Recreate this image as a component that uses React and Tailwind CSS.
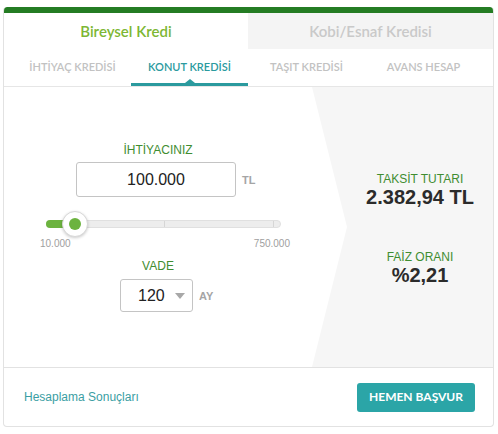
import React from 'react';

const subTabs = ['İHTİYAÇ KREDİSİ', 'KONUT KREDİSİ', 'TAŞIT KREDİSİ', 'AVANS HESAP'];

export default function App() {
  return (
    <div className="w-[498px] h-[434px] bg-white pt-[7px] pl-[3px] font-['Liberation_Sans',Arial,sans-serif]">
      <div className="w-[491px] h-[420px] flex flex-col rounded-[4px] border border-t-0 border-[#e2e2e2] overflow-hidden">
        {/* green strip */}
        <div className="h-[6px] bg-[#247c23] -mx-px rounded-t-[4px]" />

        {/* main tabs */}
        <div className="flex h-[36px] font-['Lato',sans-serif] text-[15px] font-semibold">
          <div className="w-[244px] flex items-center justify-center text-[#7db734]">Bireysel Kredi</div>
          <div className="flex-1 flex items-center justify-center bg-[#f4f4f4] text-[#c9c9c9]">Kobi/Esnaf Kredisi</div>
        </div>

        {/* sub tabs */}
        <div className="flex h-[38px] px-[10px] border-b border-[#e6e6e6] font-['Lato',sans-serif] text-[11px] font-semibold">
          {subTabs.map((t, i) => (
            <div
              key={t}
              className={`relative w-[117px] flex items-center justify-center ${i === 1 ? 'text-[#2b9a9e]' : 'text-[#c2c2c2]'}`}
            >
              {t}
              {i === 1 && (
                <>
                  <div className="absolute left-0 right-0 bottom-0 h-[3px] bg-[#2b9a9e]" />
                  <div className="absolute left-1/2 -translate-x-1/2 bottom-[3px] w-0 h-0 border-x-[5px] border-x-transparent border-b-[4px] border-b-[#2b9a9e]" />
                </>
              )}
            </div>
          ))}
        </div>

        {/* calculator body */}
        <div className="flex h-[280px]">
          <div className="w-[308px] flex flex-col pt-[56px]">
            <div className="text-center text-[12px] leading-[14px] text-[#3f8d31]">İHTİYACINIZ</div>
            <div className="flex items-center mt-[5px] ml-[72px]">
              <div className="w-[160px] h-[35px] rounded-[3px] border border-[#c4c4c4] flex items-center justify-center text-[16px] text-[#222]">
                100.000
              </div>
              <span className="ml-[6px] mt-[2px] text-[11px] font-bold text-[#a5a5a5]">TL</span>
            </div>

            {/* slider */}
            <div className="relative ml-[42px] mt-[23px] w-[235px] h-[8px] rounded-full bg-[#ededed] border border-[#e0e0e0]">
              <div className="absolute left-[-1px] top-[-1px] h-[8px] w-[30px] rounded-full bg-[#6cb33f]" />
              <div className="absolute left-[117px] top-0 w-px h-[6px] bg-[#d6d6d6]" />
              <div className="absolute right-[6px] top-0 w-px h-[6px] bg-[#d6d6d6]" />
              <div className="absolute left-[15px] top-1/2 -translate-y-1/2 w-[26px] h-[26px] rounded-full bg-white border border-[#d8d8d8] shadow-[0_1px_3px_rgba(0,0,0,0.2)] flex items-center justify-center">
                <div className="w-[12px] h-[12px] rounded-full bg-[#6cb33f]" />
              </div>
            </div>
            <div className="flex justify-between ml-[36px] w-[250px] mt-[10px] text-[10px] leading-[12px] text-[#a0a0a0]">
              <span>10.000</span>
              <span>750.000</span>
            </div>

            <div className="text-center mt-[9px] text-[12px] leading-[14px] text-[#3f8d31]">VADE</div>
            <div className="flex items-center mt-[6px] ml-[116px]">
              <div className="w-[73px] h-[33px] rounded-[3px] border border-[#c4c4c4] flex items-center pl-[17px] text-[16px] text-[#222]">
                120
                <span className="ml-[10px] mt-[1px] w-0 h-0 border-x-[5px] border-x-transparent border-t-[6px] border-t-[#a8a8a8]" />
              </div>
              <span className="ml-[6px] mt-[2px] text-[11px] font-bold text-[#a5a5a5]">AY</span>
            </div>
          </div>

          <div className="flex-1 bg-[#f6f6f6] [clip-path:polygon(0_0,100%_0,100%_100%,0_100%,35px_50%)] pl-[35px] flex flex-col items-center pt-[85px] text-center">
            <div className="text-[12px] leading-[14px] text-[#3f8d31]">TAKSİT TUTARI</div>
            <div className="text-[20px] leading-[22px] font-bold text-[#2b2b2b]">2.382,94 TL</div>
            <div className="mt-[42px] text-[12px] leading-[14px] text-[#3f8d31]">FAİZ ORANI</div>
            <div className="text-[20px] leading-[22px] font-bold text-[#2b2b2b]">%2,21</div>
          </div>
        </div>

        {/* footer */}
        <div className="flex-1 border-t border-[#e2e2e2] flex items-center justify-between pl-[20px] pr-[18px]">
          <span className="text-[12px] text-[#3a9ea3]">Hesaplama Sonuçları</span>
          <button className="w-[118px] h-[29px] rounded-[3px] bg-[#2ba5a7] text-white text-[12px] font-bold font-['Lato',sans-serif]">
            HEMEN BAŞVUR
          </button>
        </div>
      </div>
    </div>
  );
}
